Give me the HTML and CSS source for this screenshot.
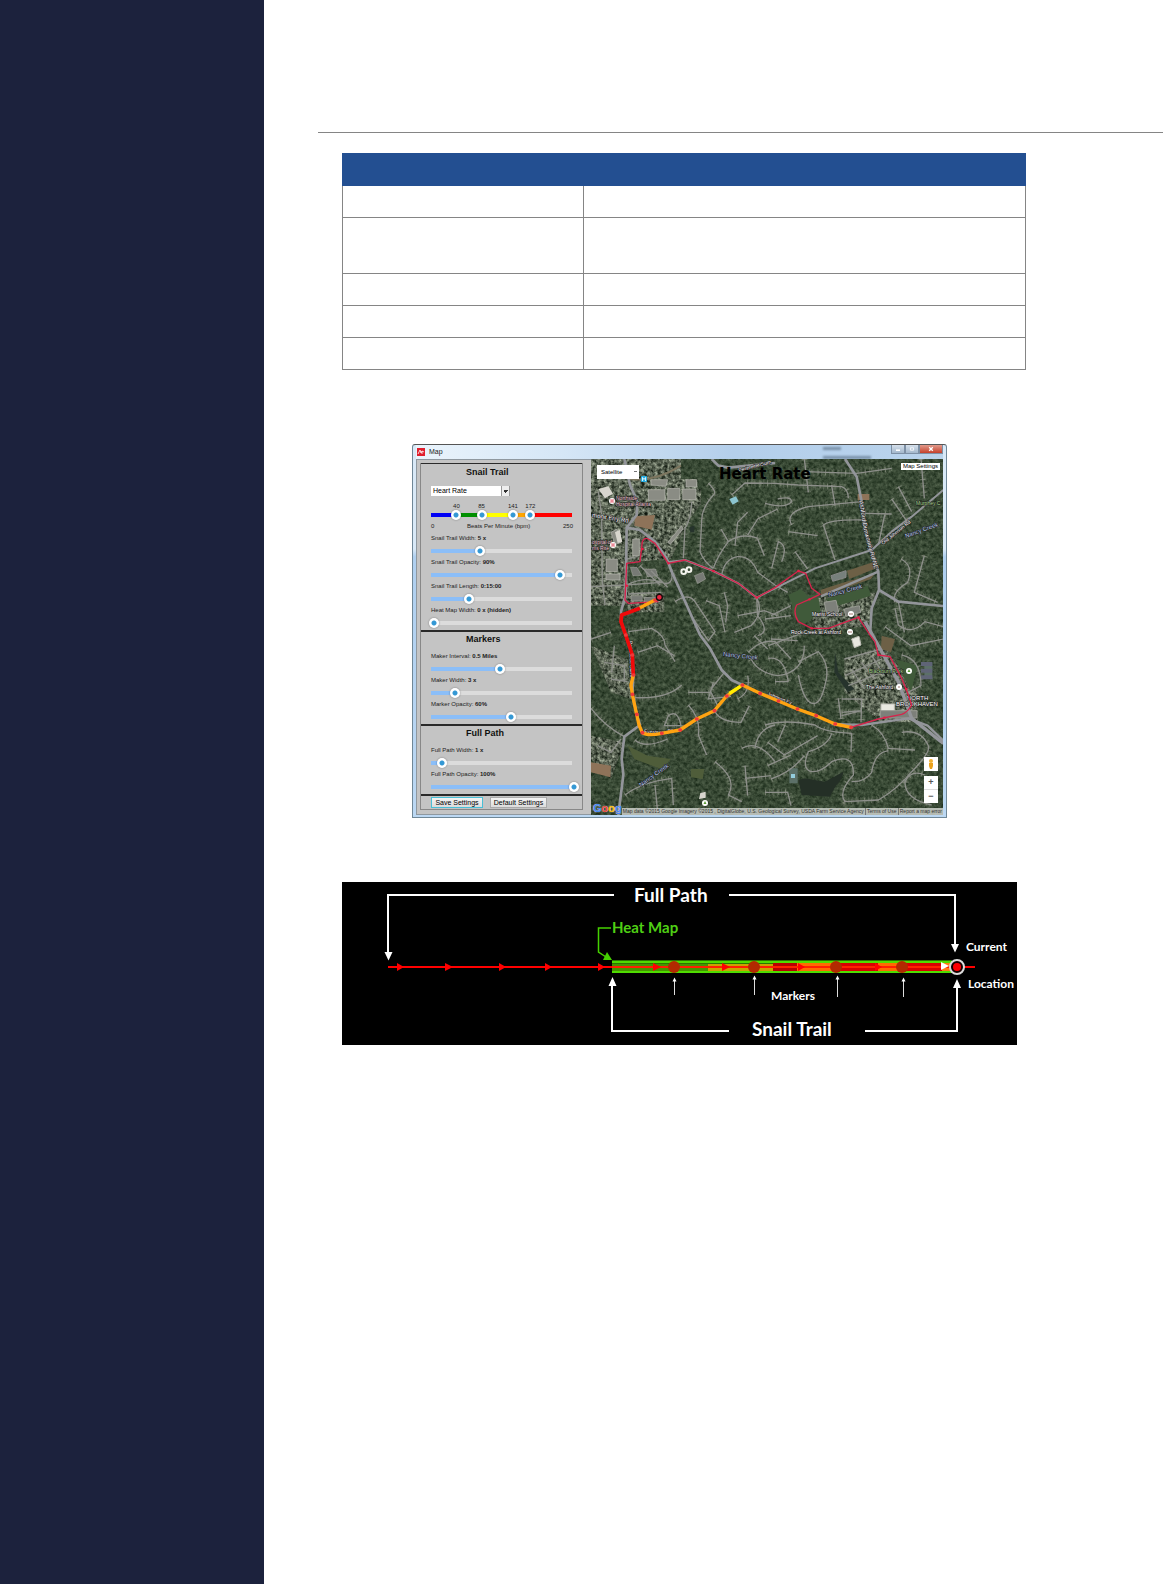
FILE: index.html
```html
<!DOCTYPE html>
<html lang="en">
<head>
    <meta charset="UTF-8">
    <meta name="viewport" content="width=device-width, initial-scale=1.0">
    <title>Map Settings</title>
    <link rel="stylesheet" href="styles.css">
</head>
<body>

    <div class="page">
        <aside class="sidebar"></aside>

        <main class="main">
            <header class="page-header"></header>

            <div class="content">
                <!-- Settings table -->
                <table class="doc-table">
                    <colgroup>
                        <col class="name-col">
                        <col>
                    </colgroup>
                    <thead>
                        <tr><th colspan="2"></th></tr>
                    </thead>
                    <tbody>
                        <tr><td></td><td></td></tr>
                        <tr class="tall"><td></td><td></td></tr>
                        <tr><td></td><td></td></tr>
                        <tr><td></td><td></td></tr>
                        <tr><td></td><td></td></tr>
                    </tbody>
                </table>

                <!-- Map window -->
                <section class="window">
                    <div class="title-bar">
                        <svg class="app-icon" viewBox="0 0 8 8"><rect width="8" height="8" fill="#e01f2d"/><path d="M1 6L3 2L4 5L5 3L7 4M5 3V6" fill="none" stroke="#fff" stroke-width=".8"/></svg>
                        <span class="title">Map</span>
                        <div class="ghost"><span></span><span></span></div>
                        <div class="window-buttons">
                            <button type="button" aria-label="Minimize"><svg viewBox="0 0 15 9"><path d="M5 6h5" stroke="#fff" stroke-width="2"/></svg></button>
                            <button type="button" aria-label="Maximize"><svg viewBox="0 0 15 9"><path d="M5.500 3h4v3h-4z" fill="none" stroke="#fff"/></svg></button>
                            <button type="button" class="close" aria-label="Close"><svg viewBox="0 0 15 9"><path d="M5.500 2.500l4 4m0-4l-4 4" stroke="#fff" stroke-width="1.500"/></svg></button>
                        </div>
                    </div>

                    <div class="window-body">
                        <form class="panel">
                            <div class="panel-box">
                                <section class="group first">
                                    <h2>Snail Trail</h2>
                                    <select class="metric" aria-label="Snail trail data"><option>Heart Rate</option></select>
                                    <div class="zones">
                                        <div class="zone-values">
                                            <span style="left: 16%">40</span>
                                            <span style="left: 34%">85</span>
                                            <span style="left: 56.400%">141</span>
                                            <span style="left: 68.800%">172</span>
                                        </div>
                                        <div class="zone-track">
                                            <input type="range" min="0" max="250" value="40" aria-label="Zone 1">
                                            <input type="range" min="0" max="250" value="85" aria-label="Zone 2">
                                            <input type="range" min="0" max="250" value="141" aria-label="Zone 3">
                                            <input type="range" min="0" max="250" value="172" aria-label="Zone 4">
                                        </div>
                                        <div class="zone-scale"><span>0</span><span>Beats Per Minute (bpm)</span><span>250</span></div>
                                    </div>
                                    <div class="fields">
                                        <label class="field">Snail Trail Width: <b>5 x</b><input type="range" value="33" style="--value: 33%"></label>
                                        <label class="field">Snail Trail Opacity: <b>90%</b><input type="range" value="90" style="--value: 90%"></label>
                                        <label class="field">Snail Trail Length: <b>0:15:00</b><input type="range" value="25" style="--value: 25%"></label>
                                        <label class="field">Heat Map Width: <b>0 x (hidden)</b><input type="range" value="0" style="--value: 0%"></label>
                                    </div>
                                </section>
                                <section class="group">
                                    <h2>Markers</h2>
                                    <div class="fields">
                                        <label class="field">Maker Interval: <b>0.5 Miles</b><input type="range" value="47" style="--value: 47%"></label>
                                        <label class="field">Maker Width: <b>3 x</b><input type="range" value="15" style="--value: 15%"></label>
                                        <label class="field">Marker Opacity: <b>60%</b><input type="range" value="55" style="--value: 55%"></label>
                                    </div>
                                </section>
                                <section class="group">
                                    <h2>Full Path</h2>
                                    <div class="fields">
                                        <label class="field">Full Path Width: <b>1 x</b><input type="range" value="6" style="--value: 6%"></label>
                                        <label class="field">Full Path Opacity: <b>100%</b><input type="range" value="100" style="--value: 100%"></label>
                                    </div>
                                </section>
                                <div class="actions">
                                    <button type="button" class="save">Save Settings</button>
                                    <button type="button">Default Settings</button>
                                </div>
                            </div>
                        </form>

                        <div class="map">
                            <svg class="map-art" viewBox="0 0 352 356" preserveAspectRatio="xMidYMid slice">
                                <defs>
                                    <filter id="trees" x="0" y="0" width="100%" height="100%" color-interpolation-filters="sRGB">
                                        <feTurbulence type="fractalNoise" baseFrequency=".28" numOctaves="4" seed="7"/>
                                        <feColorMatrix values=".34 0 0 0 .050  .34 0 0 0 .115  .31 0 0 0 .050  0 0 0 0 1"/>
                                    </filter>
                                    <filter id="built" x="0" y="0" width="100%" height="100%" color-interpolation-filters="sRGB">
                                        <feTurbulence type="fractalNoise" baseFrequency=".1" numOctaves="4" seed="3" result="n"/>
                                        <feColorMatrix in="n" values="1.500 0 0 0 -.32  1.500 0 0 0 -.3  1.400 0 0 0 -.3  0 0 0 0 1" result="c"/>
                                        <feComposite in="c" in2="SourceGraphic" operator="in"/>
                                    </filter>
                                    <g id="roads">
                                        <path d="M0 383L102 378L212 370M22 98L32 168L34 368L42 438M302 128Q300 180 282 208L277 298"/>
                                        <path d="M352 73Q380 100 367 108Q330 150 332 188L327 278Q340 310 367 328M422 108L462 72L552 73L622 78L752 83Q772 90 772 118"/>
                                        <path d="M367 328Q380 290 412 248Q450 220 502 238M392 348Q400 300 440 293Q480 290 500 340L552 378L590 400"/>
                                        <path d="M432 260L440 190L470 160M412 248L390 210M470 228L500 180L560 150M500 240L520 290"/>
                                        <path d="M252 428Q292 400 312 428L372 518L352 545L300 470M345 425L385 440L402 520M400 400L410 440L404 490M440 470L520 455L560 470"/>
                                        <path d="M497 416Q520 460 480 500L430 520M497 416L500 470Q540 520 500 530M540 470L600 440M107 378Q160 350 212 370Q250 385 242 330M112 405L210 400M107 300L140 292M147 320L207 378M180 335L230 385"/>
                                        <path d="M642 38L797 43L902 28M602 198Q580 160 652 143L812 128M697 198L732 303M697 198Q720 180 822 183M822 163L902 165M922 83L962 158M882 163L862 258M902 120L950 190M990 0L1000 118M640 0L652 100M722 78L732 140"/>
                                        <path d="M522 133Q580 150 602 128Q600 110 560 120M542 328L562 248Q592 260 572 308M612 278L650 330M592 218L680 230M930 300Q970 320 950 370Q900 400 912 430M1000 290L970 400L1040 430"/>
                                        <path d="M912 448L922 498Q962 530 1002 488L1057 503M922 428L940 520M522 480L600 470M540 540L620 545M882 503L960 560L1057 540"/>
                                        <path d="M112 518L182 508Q222 530 222 558L252 608M132 716Q230 720 272 678M0 748Q40 800 100 833M292 738Q330 780 322 828L347 888M372 758Q390 790 450 790L475 740M0 540L60 520M40 610L100 620L100 668M60 660L110 668M140 580L200 560L250 590"/>
                                        <path d="M367 670L352 720L420 712M292 700L360 700L380 740M440 720Q480 700 470 650M400 640L360 690M452 868Q500 840 552 908M492 868Q500 810 552 798M372 908Q440 960 412 1008L452 1028M462 920L470 1010M462 958L540 950M540 960Q600 940 640 890"/>
                                        <path d="M102 1008Q150 970 242 958L247 1038M192 978L200 1060M62 640L70 560M20 860L60 880L90 840M132 843Q160 870 230 840M232 770Q260 750 270 800L220 800Z"/>
                                        <path d="M522 798Q580 780 672 798Q700 820 782 823M722 823Q712 860 652 878Q630 930 662 938Q690 940 722 908Q790 880 787 948Q740 1000 762 1028L862 1023Q920 990 962 938Q1020 880 1012 860Q990 810 932 820"/>
                                        <path d="M842 798Q880 820 892 868L972 873M892 875Q850 880 842 940Q820 970 782 968M942 968Q960 930 1002 948M942 968Q940 1020 1022 1038M530 850L580 888L680 830M582 798L560 850M530 920L600 888M522 1000L590 1000L600 1040"/>
                                        <path d="M622 608L682 578Q720 620 702 678Q690 730 672 733Q640 740 622 648M532 598Q580 590 592 668M552 668L592 668M532 560L640 520M752 720L812 720L810 790M752 760L812 755L752 770M742 718L750 780M782 823L780 880"/>
                                        <path d="M762 650L872 600M772 680L872 640M782 630L820 690M812 610L850 660M842 590L880 650M872 570L760 600M932 588Q990 600 990 680L932 710M472 580Q510 540 552 548L600 600M490 530L530 570M480 600Q500 640 560 650Q640 640 640 560"/>
                                    </g>
                                </defs>
                                <rect width="352" height="356" filter="url(#trees)"/>

                                <!-- Terrain and roads, drawn in thirds of a pixel -->
                                <g transform="scale(.33333)">
                                    <g filter="url(#built)" opacity=".6">
                                        <path d="M0 0H270V90H330V135L290 190L240 300L110 310V440H0Z"/>
                                        <path d="M110 400H220V460H110ZM220 60H320V140H220ZM640 420L860 400L830 500L680 520ZM760 600L880 560L980 700L980 790H870L760 700ZM0 560L110 600L120 720L60 700Z"/>
                                        <path d="M0 830L100 850L60 960L0 900Z"/>
                                    </g>
                                    <g fill="none" stroke="#a3a499" stroke-width="24" stroke-dasharray="4 8" opacity=".22"><use href="#roads"/></g>
                                    <g fill="none" stroke="#dcdacc" stroke-width="16" stroke-dasharray="3 17" opacity=".25"><use href="#roads"/></g>

                                    <path d="M132 172L192 168L182 212L130 200ZM0 910L60 920L58 955L0 940ZM800 105H835V123H800Z" fill="#8e7359"/>
                                    <path d="M768 335L850 308L850 330L775 360ZM690 392L760 370L850 345L840 360L690 412ZM872 530L912 540L900 580L870 570Z" fill="#6d6046"/>
                                    <path d="M602 420L680 405L690 460L640 495L605 470ZM702 420L830 380L840 410L740 440ZM592 408L630 390L660 420L600 430ZM912 600L980 620L960 700Z" fill="#405a3a"/>
                                    <path d="M110 860L170 890L240 900L210 930L130 900ZM300 930L340 930L335 960L300 955Z" fill="#4f5d3a"/>
                                    <path d="M622 963L642 958L702 968L757 938Q755 960 735 980L722 1003L717 1013L632 1008Z" fill="#242f26"/>
                                    <path d="M732 580L742 640L790 690L770 700L730 640ZM295 205L310 200L310 220L298 220Z" fill="#26332c"/>
                                    <path d="M415 120l20-8l8 15l-18 10z" fill="#8cc4cf"/>
                                    <path d="M595 928h25v45h-25zM1000 610h24v50h-24z" fill="#5c7068"/>
                                    <path d="M600 945h12v12h-12z" fill="#94cddd"/>

                                    <!-- Commercial blocks -->
                                    <g fill="#8a8c84" stroke="#c0c0b8" stroke-width="3">
                                        <path d="M172 92h50v32h-50zM230 88h36v34h-36zM275 90h40v32h-40zM285 62h32v22h-32zM180 62l50 0l-5 20l-45-4zM60 220l18-10l12 40l-18 8zM45 300h34v38h-34zM45 345h42v18h-42zM125 240h20v50h-20zM230 250l42-50l4 10l-38 46z" stroke-opacity=".6"/>
                                        <path d="M118 325l20 0l14 24l-26 2zM160 330l34 0l6 20l-30 4zM120 410h34v16h-34zM160 415h44v14h-44zM310 350l26-10l8 20l-24 14z" fill="#777a75" stroke-opacity=".4"/>
                                        <path d="M720 350l45-15v20l-40 12z" fill="#77807c" stroke="#888"/>
                                        <path d="M870 735h40v24h-40zM782 540l22-8l6 26l-20 8z" fill="#e8e8e0"/>
                                        <path d="M868 755h110v22h-110zM700 430l35-6l8 35l-35 10zM760 450l45-10l4 20l-45 12z" fill="#7d807a" stroke="#989a92"/>
                                        <path d="M990 615h34M990 635h34M990 655h34" fill="none" stroke="#5f6476" stroke-width="12"/>
                                    </g>
                                    <path d="M22 90l30-8l14 22l-24 14zM72 220l14-8l8 36l-14 4zM328 1002l16-4v18l-20 4z" fill="#d8d6ce"/>
                                    <g fill="none" stroke="#f4f4ee" stroke-width="6"><circle cx="278" cy="338" r="7"/><circle cx="294" cy="332" r="7"/></g>

                                    <g fill="none" stroke="#8d8f8a" stroke-width="4"><use href="#roads"/></g>
                                    <g fill="none" stroke="#93959a" stroke-linejoin="round">
                                        <path d="M100 0L117 78L139 128L137 168L107 206L104 408L90 458L90 488L104 528L124 588L127 648L124 706L137 766L147 798L100 833L92 898L97 948L82 1068" stroke-width="8"/>
                                        <path d="M107 206L147 213L192 248L227 298L242 338L287 438L327 528L357 568L392 633L422 663L454 678" stroke-width="8"/>
                                        <path d="M227 310L282 303L367 336L442 373L497 416L522 403L672 328L842 273L902 218L962 173L1057 93" stroke-width="6"/>
                                        <path d="M762 0L797 53L812 128L822 208L842 278L862 338L864 393L842 448L837 528M864 393L922 428L1057 441" stroke-width="8"/>
                                        <path d="M822 488L872 578L922 668L962 778L1057 853" stroke-width="10"/>
                                        <path d="M722 795L812 798L952 778L1010 800L1057 845M690 412L862 338" stroke-width="7"/>
                                        <path d="M362 0L382 20L412 26L552 12" stroke-width="8"/>
                                        <path d="M117 60Q190 70 270 20" stroke="#7d765f" stroke-width="6"/>
                                    </g>
                                </g>

                                <!-- Place names -->
                                <g class="map-labels">
                                    <path id="ashford" d="M268 42L273 72L284 112" fill="none"/>
                                    <path id="evergreen" d="M53 274L74 275L94 269" fill="none"/>
                                    <text class="road"><textPath href="#ashford">Ashford Dunwoody Rd NE</textPath></text>
                                    <text><textPath href="#evergreen">Evergreen Dr</textPath></text>
                                    <text class="road" transform="translate(1 58) rotate(9)">monit Erry Rd</text>
                                    <text transform="translate(148 13) rotate(-15)">Perimeter Sum</text>
                                    <text transform="translate(38 182) rotate(88)">Peachtree Dunw</text>
                                    <text transform="translate(292 86) rotate(-39)">Old Johnson Rd</text>
                                    <text transform="translate(176 236) rotate(22)">Johnson Fy</text>
                                    <g class="water">
                                        <text transform="translate(315 79) rotate(-20)">Nancy Creek</text>
                                        <text transform="translate(238 138) rotate(-15)">Nancy Creek</text>
                                        <text transform="translate(132 197) rotate(6)">Nancy Creek</text>
                                        <text transform="translate(50 328) rotate(-36)">Nancy Creek</text>
                                    </g>
                                    <text class="park" x="325" y="46">Murphey C</text>
                                    <text class="park" x="278" y="214">Blackburn Park</text>
                                    <text class="pink" x="25" y="41">Northside</text>
                                    <text class="pink" x="25" y="47">Hospital Atlanta</text>
                                    <text class="pink" x="1" y="85">ospital of</text>
                                    <text class="pink" x="1" y="91">ms Rite</text>
                                    <text x="221" y="157">Marist School</text>
                                    <text x="200" y="175">Rock Creek at Ashford</text>
                                    <text x="275" y="230">The Ashford</text>
                                    <text class="area" x="316" y="241">NORTH</text>
                                    <text class="area" x="305" y="247">BROOKHAVEN</text>
                                </g>

                                <!-- Pins -->
                                <g fill="#fff">
                                    <circle cx="21" cy="42" r="3"/><circle cx="22" cy="86" r="3"/><circle cx="260" cy="155" r="3"/><circle cx="259" cy="173" r="3"/><circle cx="318" cy="212" r="3"/><circle cx="308" cy="228" r="3"/><circle cx="114" cy="344" r="3"/>
                                    <rect x="50" y="17" width="6" height="6" rx="1" fill="#27aee4"/>
                                </g>
                                <path d="M20 40v4m2-4v4m-2-2h2M21 84v4m2-4v4m-2-2h2" fill="none" stroke="#e0475b" stroke-width=".8"/>
                                <path d="M51.500 22v-3.500l1.500 2l1.500-2v3.500" fill="none" stroke="#fff" stroke-width=".8"/>
                                <path d="M318 210l-1.500 3h3zM114 342l-1.500 3h3z" fill="#5a9b35"/>
                                <path d="M258 155h4M257 173h4M307 228h2" stroke="#a0776f"/>

                                <!-- Full path and snail trail -->
                                <g transform="scale(.33333)" fill="none" stroke-linejoin="round">
                                    <path d="M202 428L112 433L102 423L107 313L147 308L154 248Q160 234 172 240L192 253L232 313L282 303L367 336L442 373L497 416L552 386L622 336L644 343L662 388L687 406L655 421L617 438Q605 460 622 488L662 508L712 508L802 475L837 528L852 548L862 588L897 593L932 658L952 708L962 738Q950 760 932 766L862 780L780 805" stroke="#d6244c" stroke-width="4"/>
                                    <path d="M147 448L92 468L90 488L104 528L124 588L127 648" stroke="#f00a0a" stroke-width="11"/>
                                    <path d="M192 423L147 446M127 648L120 678L124 706L137 766L144 798L154 821Q170 832 212 823L267 813L317 780L370 755L407 711L454 678L507 703L562 726L619 750L675 770L732 795L780 805" stroke="#ffa312" stroke-width="10"/>
                                    <path d="M415 703L448 682" stroke="#ffee00" stroke-width="10"/>
                                    <path d="M124 706h1M137 766h1M154 821h1M212 823h1M267 813h1M317 780h1M370 755h1M407 711h1M454 678h1M507 703h1M562 726h1M619 750h1M675 770h1M732 795h1M780 805h1M104 528h1M124 588h1M127 648h1M192 423h1" stroke="#ee3a3a" stroke-width="11" stroke-linecap="round"/>
                                    <path d="M154 270h1M107 380h1M232 313h1M367 336h1M497 416h1M622 336h1M655 421h1M662 508h1M802 475h1M862 588h1M945 690h1M880 776h1" stroke="#e31f45" stroke-width="7" stroke-linecap="round"/>
                                    <circle cx="205" cy="415" r="9" fill="#e8253f" stroke="#140a0a" stroke-width="4"/>
                                </g>
                            </svg>

                            <strong class="map-title">Heart Rate</strong>
                            <select class="map-type" aria-label="Map type"><option>Satellite</option></select>
                            <button type="button" class="map-settings">Map Settings</button>
                            <button type="button" class="pegman" aria-label="Street View"><svg viewBox="0 0 14 14"><circle cx="7" cy="4" r="2" fill="#f0b030"/><path d="M5 6h4v3l-1 3H6L5 9z" fill="#e9a11c"/></svg></button>
                            <div class="zoom">
                                <button type="button">+</button>
                                <button type="button">−</button>
                            </div>
                            <div class="map-footer">
                                <span class="google" aria-label="Google"><i>G</i><i>o</i><i>o</i><i>g</i></span>
                                <div class="legal">
                                    <span>Map data ©2015 Google Imagery ©2015 , DigitalGlobe, U.S. Geological Survey, USDA Farm Service Agency</span>
                                    <a href="#">Terms of Use</a>
                                    <a href="#">Report a map error</a>
                                </div>
                            </div>
                        </div>
                    </div>
                </section>

                <!-- Path diagram -->
                <figure class="diagram">
                    <svg viewBox="0 0 675 163">
                        <g fill="none" stroke="#fff" stroke-width="2">
                            <path d="M272 13H46V72M387 13H613V64M387 149H270V102M523 149H615V105"/>
                        </g>
                        <g fill="#fff">
                            <path d="M42.500 70h8L46.500 78.500zM609 62h8L613 70.500zM266.500 104h8L270.500 95zM611 106h8L615 97z"/>
                        </g>

                        <!-- Heat map band -->
                        <rect x="270" y="78" width="340" height="13" fill="#2c7500"/>
                        <path d="M270 80H610M270 90H610" stroke="#4fdc00" stroke-width="2"/>
                        <rect x="270" y="82" width="96" height="7" fill="#459400"/>
                        <rect x="366" y="82" width="65" height="7" fill="#c9a400"/>
                        <rect x="431" y="81" width="24" height="8" fill="#b80000"/>
                        <rect x="455" y="81" width="40" height="8" fill="#ff6a00"/>
                        <rect x="495" y="81" width="41" height="8" fill="#d80000"/>
                        <rect x="536" y="81" width="24" height="8" fill="#ff6a00"/>
                        <rect x="560" y="81" width="40" height="8" fill="#d80000"/>
                        <rect x="600" y="81" width="8" height="8" fill="#ff7a10"/>

                        <path d="M46 85H270M622 85H633" stroke="#f00" stroke-width="2"/>
                        <path d="M270 85H608" stroke="#ff2000" stroke-width="2"/>
                        <path d="M55 81v8l7-4zM103 81v8l8-4zM157 81v8l7-4zM203 81v8l7-4zM256 81v8l7-4zM311 81v8l8-4zM380 81v8l8-4zM456 81v8l7-4zM533 81v8l7-4z" fill="#f00"/>
                        <g fill="#b22a00"><circle cx="332" cy="85" r="6"/><circle cx="412" cy="85" r="6"/><circle cx="494" cy="85" r="6"/><circle cx="560" cy="85" r="6"/></g>
                        <path d="M599 80v8l8-4z" fill="#fff"/>
                        <circle cx="615" cy="85" r="7" fill="#180000" stroke="#dcdcdc" stroke-width="2"/>
                        <circle cx="615" cy="85" r="4" fill="#f00"/>

                        <path d="M269 46H256.500V70L264 75" fill="none" stroke="#45d100" stroke-width="1.500"/>
                        <path d="M265 70L261 78H270z" fill="#45d100"/>

                        <path d="M332.500 98V113M412.500 96V113M495.500 96V115M561.500 98V115" stroke="#ddd"/>
                        <path d="M330.500 99.500h4l-2-4zM410.500 97.500h4l-2-4zM493.500 97.500h4l-2-4zM559.500 99.500h4l-2-4z" fill="#fff"/>

                        <text class="big" x="292" y="20">Full Path</text>
                        <text class="heat" x="270" y="51">Heat Map</text>
                        <text class="small" x="624" y="69">Current</text>
                        <text class="small" x="626" y="106">Location</text>
                        <text class="small" x="429" y="118">Markers</text>
                        <text class="big" x="410" y="154">Snail Trail</text>
                    </svg>
                </figure>
            </div>
        </main>
    </div>

</body>
</html>
```
FILE: styles.css
```css
/* Basic Reset and Global Styles */
* {
    box-sizing: border-box;
    margin: 0;
    padding: 0;
}

body {
    font-family: "Liberation Sans", Arial, sans-serif;
    background-color: #fff;
    color: #222;
}

button, select, input {
    font-family: inherit;
    border: none;
    border-radius: 0;
}

/* Page layout */
.page {
    display: flex;
    min-height: 100vh;
}

.sidebar {
    flex: 0 0 264px;
    background-color: #1c223d;
}

.main {
    flex: 1;
    min-width: 0;
    padding-left: 54px;
}

.page-header {
    height: 133px;
    border-bottom: 1px solid #858585;
}

.content {
    padding: 20px 24px;
}

/* Table */
.doc-table {
    width: 100%;
    max-width: 684px;
    table-layout: fixed;
    border-spacing: 0;
}

.doc-table .name-col {
    width: 242px;
}

.doc-table th {
    height: 33px;
    background-color: #234f91;
}

.doc-table td {
    height: 32px;
    border-right: 1px solid #858585;
    border-bottom: 1px solid #858585;
}

.doc-table td:first-child {
    border-left: 1px solid #858585;
}

.doc-table .tall td {
    height: 56px;
}

/* Map window */
.window {
    max-width: 535px;
    margin: 74px 0 0 70px;
    padding: 0 3px 2px;
    border: 1px solid #6f8797;
    border-top-color: #555;
    border-radius: 3px 3px 0 0;
    background: linear-gradient(#d9e9f7, #d9e9f7 28%, #b0d0f0 30%, #bcd8f3);
}

.title-bar {
    display: flex;
    height: 14px;
    align-items: flex-start;
    background: linear-gradient(90deg, #eaf4fc, #d5e6f6 28%, #b4cfeb 60%, #b9d3ec);
}

.app-icon {
    width: 8px;
    height: 8px;
    margin: 3px 4px 0 1px;
}

.title {
    flex: 1;
    font-size: 7px;
    line-height: 14px;
}

.ghost {
    display: grid;
    gap: 6px;
    width: 68px;
    padding-top: 2px;
    filter: blur(1px);
}

.ghost span {
    width: 18px;
    height: 3px;
    background-color: #7890a8;
}

.ghost span + span {
    width: 48px;
}

.window-buttons {
    display: flex;
}

.window-buttons button {
    width: 14px;
    height: 9px;
    display: flex;
    background: linear-gradient(#d5e0ec, #a4b8cc);
    border: 1px solid #7d90a5;
    border-top: none;
}

.window-buttons svg {
    width: 100%;
    height: 100%;
}

.window-buttons .close {
    width: 24px;
    background: linear-gradient(#e29a8b, #c5412c);
}

.window-body {
    display: flex;
}

/* Settings panel */
.panel {
    flex: 0 0 175px;
    padding: 4px 8px 5px 4px;
    background-color: #c4c4c4;
    box-shadow: inset 1px 1px #8f989f, inset 0 -1px #8f989f;
    font-size: 6px;
    line-height: 8px;
}

.panel-box {
    border: 1px solid #888;
    border-top: none;
}

.group {
    padding: 2px 0 2px 10px;
    border-top: 2px solid #2a2a2a;
}

.group.first {
    padding-top: 3px;
    border-top-width: 1px;
}

.group h2 {
    padding-left: 35px;
    font-size: 9px;
    line-height: 11px;
    color: #111;
}

.group .fields {
    margin-top: 7px;
}

.group.first .fields {
    margin-top: 4px;
}

.metric {
    display: block;
    appearance: none;
    width: 79px;
    height: 10px;
    margin-top: 8px;
    padding-left: 2px;
    font-size: 7px;
    line-height: 10px;
    background: linear-gradient(45deg, transparent 50%, #333 50%) 72px 4px / 3px 3px no-repeat,
        linear-gradient(-45deg, transparent 50%, #333 50%) 74px 4px / 3px 3px no-repeat,
        linear-gradient(90deg, #fff 70px, #999 70px, #999 71px, #eee 71px, #eee 78px, #999 78px);
}

.zones {
    padding-top: 6px;
}

.zone-values {
    position: relative;
    height: 8px;
    width: 140px;
    margin-left: 3px;
}

.zone-values span {
    position: absolute;
    transform: translateX(-50%);
}

.zone-track {
    display: grid;
    margin-left: -2px;
    width: 150px;
    background: linear-gradient(90deg, #0000f5 25px, #009000 25px, #009000 50px, #ff0 50px, #ff0 81px, #ffa500 81px, #ffa500 99px, #f00 99px) 2px 50% / 141px 4px no-repeat;
}

.zone-track input {
    grid-area: 1 / 1;
    appearance: none;
    width: 150px;
    height: 10px;
    background: none;
    pointer-events: none;
}

.zone-scale {
    display: flex;
    justify-content: space-between;
    width: 142px;
    padding-top: 2px;
}

.fields {
    display: grid;
    gap: 2px;
}

.field {
    display: block;
    height: 22px;
}

.field input {
    display: block;
    appearance: none;
    width: 150px;
    height: 10px;
    margin: 4px 0 0 -2px;
    background: linear-gradient(90deg, #8bbef8 var(--value), #dcdcdc var(--value)) 2px 50% / 141px 4px no-repeat;
}

input::-webkit-slider-thumb {
    appearance: none;
    width: 10px;
    height: 10px;
    border-radius: 50%;
    background: radial-gradient(circle, #3498d4 2px, #fff 3px);
    box-shadow: 0 0 2px rgba(0, 0, 0, 0.4);
    pointer-events: auto;
}

.actions {
    display: flex;
    gap: 7px;
    padding: 1px 0 1px 10px;
    border-top: 2px solid #2a2a2a;
}

.actions button {
    width: 57px;
    height: 11px;
    font-size: 7px;
    line-height: 9px;
    background: linear-gradient(#f4f4f4, #dcdcdc);
    border: 1px solid #aaa;
    white-space: nowrap;
}

.actions .save {
    width: 52px;
    border-color: #49bfd6;
}

/* Map */
.map {
    position: relative;
    flex: 1;
    min-width: 0;
    background-color: #2b3a29;
}

.map-art {
    display: block;
    width: 100%;
    height: 100%;
}

.map-labels text {
    font-size: 5px;
    fill: #fff;
    stroke: #222;
    stroke-width: 1px;
    paint-order: stroke;
}

.map-labels .water text,
.map-labels .area,
.map-labels .road {
    font-size: 6px;
}

.map-labels .water text {
    fill: #b4c8ec;
}

.map-labels .park {
    fill: #a6d78e;
}

.map-labels .pink {
    fill: #f3c9d3;
}

.map-title {
    position: absolute;
    top: 6px;
    left: 128px;
    font-family: "DejaVu Sans", sans-serif;
    font-size: 15px;
    line-height: 18px;
    color: #000;
}

.map-type {
    position: absolute;
    top: 6px;
    left: 6px;
    appearance: none;
    width: 42px;
    height: 14px;
    padding-left: 4px;
    font-size: 6px;
    background: linear-gradient(#777, #777) 37px 6px / 3px 1px no-repeat, #fff;
}

.map-settings {
    position: absolute;
    top: 4px;
    right: 3px;
    width: 39px;
    height: 7px;
    font-size: 6px;
    line-height: 7px;
    background-color: #fff;
    white-space: nowrap;
}

.pegman {
    position: absolute;
    right: 5px;
    bottom: 44px;
    display: flex;
    width: 14px;
    height: 14px;
    background-color: #fff;
}

.zoom {
    position: absolute;
    right: 5px;
    bottom: 12px;
    display: grid;
    width: 14px;
    background-color: #fff;
}

.zoom button {
    height: 13px;
    font-size: 9px;
    font-weight: bold;
    line-height: 13px;
    color: #555;
    background: none;
}

.zoom button + button {
    border-top: 1px solid #ddd;
    height: 14px;
}

.map-footer {
    position: absolute;
    left: 2px;
    right: 0;
    bottom: 0;
    display: flex;
    align-items: flex-end;
}

.google {
    flex: 0 0 25px;
    font-size: 11px;
    font-weight: bold;
    line-height: 13px;
    color: #4285f4;
    text-shadow: 0 0 1px #fff;
}

.google i {
    font-style: normal;
}

.google i:nth-child(2) {
    color: #ea4335;
}

.google i:nth-child(3) {
    color: #fbbc05;
}

.legal {
    flex: 1;
    display: flex;
    justify-content: space-between;
    font-size: 5px;
    line-height: 7px;
    color: #333;
    background-color: rgba(205, 208, 202, 0.85);
    white-space: nowrap;
}

.legal span, .legal a {
    padding: 0 1px;
}

.legal a {
    color: #333;
    text-decoration: none;
    border-left: 1px solid #777;
}

/* Path diagram */
.diagram {
    max-width: 675px;
    margin-top: 64px;
    background-color: #000;
}

.diagram svg {
    display: block;
    width: 100%;
}

.diagram text {
    font-family: Lato, sans-serif;
    font-weight: bold;
    fill: #fff;
}

.diagram .big {
    font-size: 19px;
}

.diagram .heat {
    font-size: 15px;
    fill: #4fcf14;
}

.diagram .small {
    font-size: 12px;
}
```
